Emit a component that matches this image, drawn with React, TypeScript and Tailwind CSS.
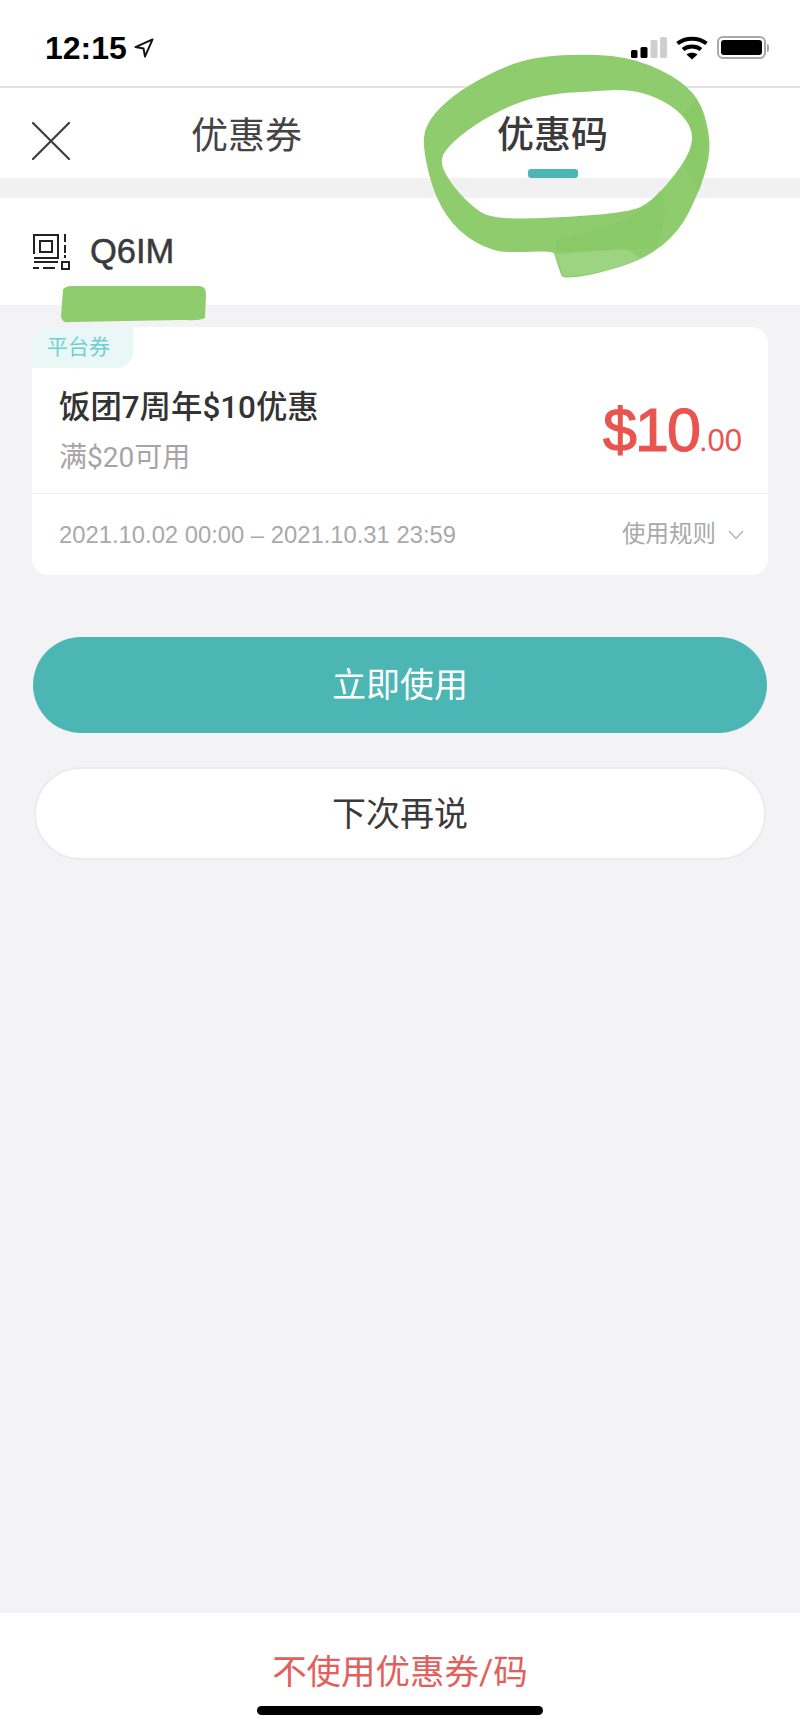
const cjk = "font-['Roboto','Noto_Sans_CJK_SC',sans-serif]"

function StatusBar() {
  return (
    <div className="flex h-[86px] items-start justify-between bg-white pl-[45px] pr-[31px] pt-[36px]">
      <div className="flex items-center gap-[7px]">
        <span className="font-['Liberation_Sans',sans-serif] text-[32px] font-bold leading-[24px] text-black">12:15</span>
        <svg width="20" height="20" viewBox="0 0 21 21" fill="none" stroke="#111" strokeWidth="2" strokeLinejoin="round">
          <path d="M1.5 9.5 19.5 1.5 11.5 19.5 10 11Z" />
        </svg>
      </div>
      <div className="flex items-start gap-[9px]">
        <svg width="36" height="22" viewBox="0 0 36 22">
          <rect x="0" y="14" width="6.5" height="8" rx="1.5" fill="#000" />
          <rect x="9.5" y="11" width="7" height="11" rx="1.5" fill="#000" />
          <rect x="19.5" y="4" width="7" height="18" rx="1.5" fill="#cfcfcf" />
          <rect x="29" y="1" width="7" height="21" rx="1.5" fill="#cfcfcf" />
        </svg>
        <svg width="32" height="24" viewBox="0 0 32 24" fill="none" stroke="#000" strokeWidth="4">
          <path d="M1.5 7.5C9.5 1 22.5 1 30.5 7.5" />
          <path d="M7 13.5C12 9.5 20 9.5 25 13.5" />
          <path d="M16 23.5 10.5 18.5C13.5 16 18.5 16 21.5 18.5Z" fill="#000" stroke="none" />
        </svg>
        <div className="flex items-center">
          <div className="flex h-[23px] w-[49px] items-center justify-center rounded-[6px] border-2 border-[#a8a8a8] p-[2px]">
            <div className="h-full w-full rounded-[3px] bg-black" />
          </div>
          <div className="ml-[1px] h-[8px] w-[2px] rounded-r-sm bg-[#a8a8a8]" />
        </div>
      </div>
    </div>
  )
}

function Tabs() {
  return (
    <div className="relative flex h-[92px] border-t-2 border-[#e2e2e2] bg-white">
      <div className="flex w-[110px] items-center pl-[32px] pt-[16px]">
        <svg width="38" height="38" viewBox="0 0 38 38" stroke="#3d3d3d" strokeWidth="2.2" strokeLinecap="round">
          <path d="M1 1 37 37M37 1 1 37" />
        </svg>
      </div>
      <div className="flex w-[273px] items-center justify-center pt-[6px]">
        <span className={`${cjk} whitespace-nowrap text-[37px] leading-none text-[#444]`}>优惠券</span>
      </div>
      <div className="ml-[113px] flex w-[113px] flex-col items-center pt-[29px]">
        <span className={`${cjk} whitespace-nowrap text-[37px] font-medium leading-none text-[#3a3a3a]`}>优惠码</span>
        <div className="mt-[15px] h-[9px] w-[50px] rounded-[3px] bg-[#4cb6b5]" />
      </div>
    </div>
  )
}

function QrIcon() {
  return (
    <svg width="37" height="36" viewBox="0 0 37 36" fill="none" stroke="#222" strokeWidth="2">
      <path d="M1 20V1H25V24H1" />
      <rect x="7" y="7" width="12" height="11" />
      <path d="M32 0V8M32 11V19M32 21V24" />
      <path d="M1 28H25M0 34H6M10 34H22" />
      <rect x="29" y="28" width="7" height="7" />
    </svg>
  )
}

function Coupon() {
  return (
    <div className="relative rounded-[16px] bg-white">
      <div className={`${cjk} absolute left-0 top-0 flex h-[41px] w-[101px] items-center rounded-tl-[16px] rounded-br-[16px] bg-[#eaf7f7] pl-[15px] text-[21px] leading-none text-[#6fcfd0]`}>
        平台券
      </div>
      <div className="flex h-[166px] items-start justify-between pl-[27px] pr-[26px] pt-[63px]">
        <div>
          <div className={`${cjk} text-[31.4px] font-medium leading-[36px] text-[#333]`}>饭团7周年$10优惠</div>
          <div className={`${cjk} mt-[14px] text-[28px] leading-[36px] text-[#a5a5a5]`}>满$20可用</div>
        </div>
        <div className="mt-[-2px] flex items-baseline font-['Liberation_Sans',sans-serif] text-[#e9544f]">
          <span className="text-[61px] leading-[84px] tracking-[-2px] [-webkit-text-stroke:1.2px_#e9544f]">$10</span>
          <span className="text-[31px] leading-none">.00</span>
        </div>
      </div>
      <div className="flex h-[82px] items-center justify-between border-t border-[#f2f2f2] pl-[27px] pr-[24px]">
        <span className="font-['Liberation_Sans',sans-serif] text-[23.8px] leading-none text-[#a9a9a9]">2021.10.02 00:00 – 2021.10.31 23:59</span>
        <div className="flex items-center gap-[12px]">
          <span className={`${cjk} text-[23.5px] leading-none text-[#a9a9a9]`}>使用规则</span>
          <svg width="16" height="10" viewBox="0 0 16 10" fill="none" stroke="#b5b5b5" strokeWidth="1.5">
            <path d="M1 1 8 8.5 15 1" />
          </svg>
        </div>
      </div>
    </div>
  )
}

type Pt = [number, number]

// closed smooth outline through midpoints of the traced points
function smooth(points: Pt[]) {
  const mid = (a: Pt, b: Pt) => `${(a[0] + b[0]) / 2} ${(a[1] + b[1]) / 2}`
  let d = `M${mid(points[points.length - 1], points[0])}`
  points.forEach((p, i) => {
    d += `Q${p[0]} ${p[1]} ${mid(p, points[(i + 1) % points.length])}`
  })
  return d + "Z"
}

const ringOuter: Pt[] = [
  [567, 54], [627, 56], [673, 75], [699, 98], [709, 130], [710, 157], [699, 192], [679, 232], [645, 259],
  [597, 274], [563, 279], [560, 272], [555, 256], [553, 251], [525, 252], [493, 252], [458, 232], [435, 198], [423, 150], [425, 125], [446, 101], [477, 80], [520, 60],
]
const ringInner: Pt[] = [
  [583, 92], [627, 89], [657, 97], [683, 114], [695, 137], [684, 164], [650, 204], [623, 213], [550, 218], [491, 219],
  [469, 204], [449, 181], [439, 160], [452, 142], [483, 119], [523, 100], [560, 93],
]

// hand-drawn green marker strokes over the screenshot
function MarkerStrokes() {
  return (
    <svg className="pointer-events-none absolute left-0 top-0 blur-[0.7px]" width="800" height="340" viewBox="0 0 800 340">
      <path fillRule="evenodd" fill="#8fcc6e" d={smooth(ringOuter) + smooth(ringInner)} />
      <path fill="#9dd482" d="M556 254 563 276C585 276 615 270 640 258L625 248Z" />
      <path fill="#7fc25c" opacity="0.35" d="M556 240C590 232 620 226 650 204L660 190C668 210 665 228 655 248C625 250 590 252 556 252Z" />
      <path fill="#7fc25c" opacity="0.35" d="M697 100C708 125 710 160 699 192L684 164C694 145 696 125 683 114Z" />
      <path fill="#8fcc6e" d="M63 290C64 287 68 286 72 286L200 286C205 287 206 290 206 296L205 318C200 321 190 320 180 320L72 322C65 323 62 322 61 316Z" />
    </svg>
  )
}

export default function App() {
  return (
    <div className="relative flex h-[1731px] w-[800px] flex-col overflow-hidden bg-[#f3f3f5]">
      <StatusBar />
      <Tabs />
      <div className="h-[20px] bg-[#f1f1f2]" />
      <div className="flex h-[107px] items-center gap-[20px] bg-white pl-[33px]">
        <QrIcon />
        <span className="font-['Liberation_Sans',sans-serif] text-[34.5px] leading-none text-[#3a3a3a] [-webkit-text-stroke:0.5px_#3a3a3a]">Q6IM</span>
      </div>

      <div className="flex flex-1 flex-col px-[32px] pt-[22px]">
        <Coupon />
        <div className={`${cjk} mx-[1px] mt-[62px] flex h-[96px] items-center justify-center rounded-full bg-[#4cb6b5] text-[34px] leading-none text-white`}>
          立即使用
        </div>
        <div className={`${cjk} mx-[2px] mt-[34px] flex h-[93px] items-center justify-center rounded-full border-2 border-[#ececec] bg-white text-[34px] leading-none text-[#3a3a3a]`}>
          下次再说
        </div>
      </div>

      <div className="flex h-[118px] justify-center bg-white pt-[40px]">
        <span className={`${cjk} text-[34.5px] leading-[38px] text-[#e2605c]`}>不使用优惠券/码</span>
      </div>
      <div className="absolute bottom-[16px] left-[257px] h-[9px] w-[286px] rounded-full bg-black" />
      <MarkerStrokes />
    </div>
  )
}
